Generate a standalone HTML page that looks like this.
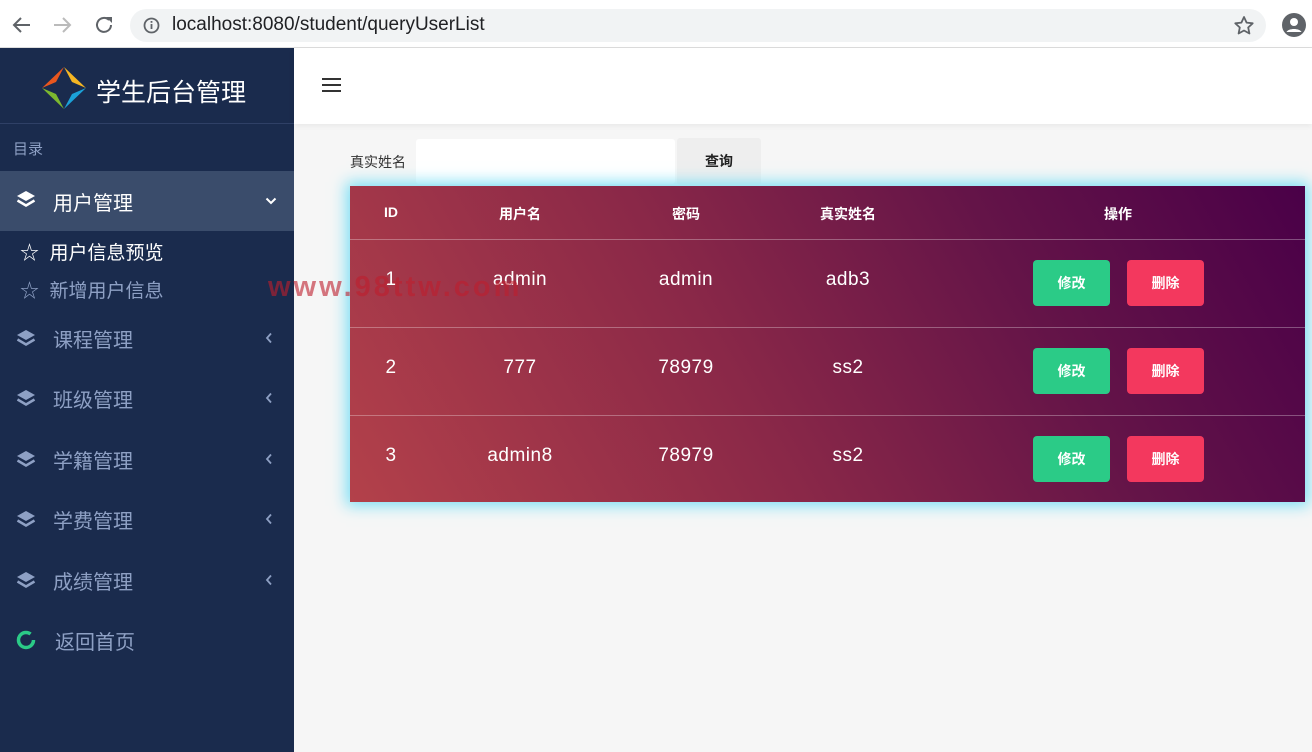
<!DOCTYPE html>
<html><head><meta charset="utf-8"><style>
*{margin:0;padding:0;box-sizing:border-box}
body{width:1312px;height:752px;overflow:hidden;background:#f6f6f6;font-family:"Liberation Sans","Noto Sans CJK SC",sans-serif;position:relative}
.abs{position:absolute}
.chrome{left:0;top:0;width:1312px;height:48px;background:#fff;border-bottom:1px solid #ddd}
.pill{left:130px;top:9px;width:1136px;height:33px;background:#f1f3f4;border-radius:17px}
.url{left:172px;top:14px;font-size:19px;color:#202124}
.side{left:0;top:48px;width:294px;height:704px;background:#1a2b4d}
.item{left:0;width:294px;height:60px;color:#8ea0c4;font-size:20px}
.item .t{position:absolute;left:53px;top:16px}
.item .ar{position:absolute;left:265px;top:24px}
.ic{position:absolute;left:16px;top:21px}
.top{left:294px;top:48px;width:1018px;height:76px;background:#fff;box-shadow:0 2px 6px rgba(0,0,0,.06)}
.tbl{left:350px;top:186px;width:955px;height:316px;background:linear-gradient(60deg,#b3414a 0%,#8a2848 40%,#641448 70%,#4a0048 100%);box-shadow:0 0 14px 4px #7fe0f5}
.c{position:absolute;color:#fff;transform:translateX(-50%);white-space:nowrap}
.h{font-size:14px;font-weight:bold;top:18px}
.d{font-size:19px;letter-spacing:.5px}
.line{position:absolute;left:0;width:955px;height:1px;background:rgba(255,255,255,.3)}
.btn{position:absolute;width:77px;height:46px;border-radius:4px;color:#fff;font-size:14px;font-weight:bold;text-align:center;line-height:46px}
.g{background:#2bcb87}.r{background:#f3385e}
</style></head><body>
<div class="abs chrome"></div>
<svg class="abs" style="left:10px;top:14px" width="110" height="22" viewBox="0 0 110 22"><path d="M20 11H4M11 4L4 11l7 7" stroke="#5f6368" stroke-width="2" fill="none"/><path d="M44 11h16M53 4l7 7-7 7" stroke="#bbb" stroke-width="2" fill="none"/><path d="M99 6a7 7 0 1 0 2 5" stroke="#5f6368" stroke-width="2" fill="none"/><path d="M96 3h6v6z" fill="#5f6368"/></svg>
<div class="abs pill"></div>
<svg class="abs" style="left:143px;top:17px" width="17" height="17"><circle cx="8.5" cy="8.5" r="7" stroke="#5f6368" stroke-width="1.8" fill="none"/><rect x="7.6" y="7" width="1.8" height="5" fill="#5f6368"/><rect x="7.6" y="4" width="1.8" height="1.8" fill="#5f6368"/></svg>
<div class="abs url">localhost:8080/student/queryUserList</div>
<svg class="abs" style="left:1234px;top:16px" width="20" height="19" viewBox="0 0 20 19"><path d="M10 1l2.6 5.6 6.1.7-4.5 4.2 1.2 6L10 14.5 4.6 17.5l1.2-6L1.3 7.3l6.1-.7z" stroke="#5f6368" stroke-width="1.8" fill="none" stroke-linejoin="round"/></svg>
<svg class="abs" style="left:1282px;top:13px" width="24" height="24"><circle cx="12" cy="12" r="12" fill="#5f6368"/><circle cx="12" cy="9" r="4" fill="#fff"/><path d="M4.5 19c2-4 13-4 15 0" fill="#fff"/></svg>

<div class="abs side"></div>
<svg class="abs" style="left:42px;top:67px" width="44" height="42" viewBox="0 0 44 42"><path d="M22 0L14 15 0 21z" fill="#e8561e"/><path d="M22 0l8 15 14 6z" fill="#f5b623"/><path d="M0 21l14 6 8 15z" fill="#7cb82f"/><path d="M44 21l-14 6-8 15z" fill="#1ba1d8"/></svg>
<div class="abs" style="left:96px;top:73px;font-size:25px;color:#fff">学生后台管理</div>
<div class="abs" style="left:0;top:123px;width:294px;height:1px;background:#2f4066"></div>
<div class="abs" style="left:13px;top:138px;font-size:15px;color:#8ea0c4">目录</div>
<div class="abs item" style="top:171px;background:#3a4c6b;color:#fff"><svg class="ic" style="top:19px" width="20" height="20" viewBox="0 0 20 20"><path d="M10 1l9 5-9 5-9-5z" fill="#fff"/><path d="M1.5 10.5l8.5 5 8.5-5" stroke="#fff" stroke-width="2.5" fill="none"/></svg><span class="t">用户管理</span><svg class="ar" width="12" height="10" viewBox="0 0 12 10" style="top:25px;left:265px"><path d="M1.5 2.5l4.5 4.5 4.5-4.5" stroke="#fff" stroke-width="2" fill="none"/></svg></div>
<div class="abs" style="left:20px;top:238px;font-size:19px;color:#fff">☆&nbsp; 用户信息预览</div>
<div class="abs" style="left:20px;top:276px;font-size:19px;color:#8ea0c4">☆&nbsp; 新增用户信息</div>
<div class="abs item" style="top:308px"><svg class="ic" width="20" height="20" viewBox="0 0 20 20"><path d="M10 1l9 5-9 5-9-5z" fill="#8ea0c4"/><path d="M1.5 10.5l8.5 5 8.5-5" stroke="#8ea0c4" stroke-width="2.5" fill="none"/></svg><span class="t">课程管理</span><svg class="ar" width="8" height="12" viewBox="0 0 8 12"><path d="M6 1.5L2 6l4 4.5" stroke="#8ea0c4" stroke-width="1.8" fill="none"/></svg></div>
<div class="abs item" style="top:368px"><svg class="ic" width="20" height="20" viewBox="0 0 20 20"><path d="M10 1l9 5-9 5-9-5z" fill="#8ea0c4"/><path d="M1.5 10.5l8.5 5 8.5-5" stroke="#8ea0c4" stroke-width="2.5" fill="none"/></svg><span class="t">班级管理</span><svg class="ar" width="8" height="12" viewBox="0 0 8 12"><path d="M6 1.5L2 6l4 4.5" stroke="#8ea0c4" stroke-width="1.8" fill="none"/></svg></div>
<div class="abs item" style="top:429px"><svg class="ic" width="20" height="20" viewBox="0 0 20 20"><path d="M10 1l9 5-9 5-9-5z" fill="#8ea0c4"/><path d="M1.5 10.5l8.5 5 8.5-5" stroke="#8ea0c4" stroke-width="2.5" fill="none"/></svg><span class="t">学籍管理</span><svg class="ar" width="8" height="12" viewBox="0 0 8 12"><path d="M6 1.5L2 6l4 4.5" stroke="#8ea0c4" stroke-width="1.8" fill="none"/></svg></div>
<div class="abs item" style="top:489px"><svg class="ic" width="20" height="20" viewBox="0 0 20 20"><path d="M10 1l9 5-9 5-9-5z" fill="#8ea0c4"/><path d="M1.5 10.5l8.5 5 8.5-5" stroke="#8ea0c4" stroke-width="2.5" fill="none"/></svg><span class="t">学费管理</span><svg class="ar" width="8" height="12" viewBox="0 0 8 12"><path d="M6 1.5L2 6l4 4.5" stroke="#8ea0c4" stroke-width="1.8" fill="none"/></svg></div>
<div class="abs item" style="top:550px"><svg class="ic" width="20" height="20" viewBox="0 0 20 20"><path d="M10 1l9 5-9 5-9-5z" fill="#8ea0c4"/><path d="M1.5 10.5l8.5 5 8.5-5" stroke="#8ea0c4" stroke-width="2.5" fill="none"/></svg><span class="t">成绩管理</span><svg class="ar" width="8" height="12" viewBox="0 0 8 12"><path d="M6 1.5L2 6l4 4.5" stroke="#8ea0c4" stroke-width="1.8" fill="none"/></svg></div>
<div class="abs item" style="top:610px"><svg style="position:absolute;left:16px;top:20px" width="20" height="20"><circle cx="10" cy="10" r="7.5" stroke="#2bcb87" stroke-width="3.5" fill="none" stroke-dasharray="40 7"/></svg><span class="t" style="left:55px">返回首页</span></div>

<div class="abs top"></div>
<div class="abs" style="left:322px;top:78px;width:19px;height:2px;background:#333;box-shadow:0 6px 0 #333,0 12px 0 #333"></div>

<div class="abs" style="left:350px;top:152px;font-size:14px;color:#333">真实姓名</div>
<div class="abs" style="left:416px;top:139px;width:259px;height:45px;background:#fff;border-radius:3px"></div>
<div class="abs" style="left:677px;top:138px;width:84px;height:47px;background:#eee;border-radius:3px;text-align:center;line-height:47px;font-size:14px;font-weight:bold;color:#222">查询</div>

<div class="abs tbl">
<span class="c h" style="left:41px">ID</span><span class="c h" style="left:170px">用户名</span><span class="c h" style="left:336px">密码</span><span class="c h" style="left:498px">真实姓名</span><span class="c h" style="left:768px">操作</span>
<div class="line" style="top:53px"></div>
<span class="c d" style="left:41px;top:83px">1</span><span class="c d" style="left:170px;top:83px">admin</span><span class="c d" style="left:336px;top:83px">admin</span><span class="c d" style="left:498px;top:83px">adb3</span>
<div class="btn g" style="left:683px;top:74px">修改</div><div class="btn r" style="left:777px;top:74px">删除</div>
<div class="line" style="top:141px"></div>
<span class="c d" style="left:41px;top:171px">2</span><span class="c d" style="left:170px;top:171px">777</span><span class="c d" style="left:336px;top:171px">78979</span><span class="c d" style="left:498px;top:171px">ss2</span>
<div class="btn g" style="left:683px;top:162px">修改</div><div class="btn r" style="left:777px;top:162px">删除</div>
<div class="line" style="top:229px"></div>
<span class="c d" style="left:41px;top:259px">3</span><span class="c d" style="left:170px;top:259px">admin8</span><span class="c d" style="left:336px;top:259px">78979</span><span class="c d" style="left:498px;top:259px">ss2</span>
<div class="btn g" style="left:683px;top:250px">修改</div><div class="btn r" style="left:777px;top:250px">删除</div>
</div>
<div class="abs" style="left:268px;top:271px;font-size:29px;font-weight:bold;color:rgba(190,30,45,.6);letter-spacing:3px">www.98ttw.com</div>
</body></html>
